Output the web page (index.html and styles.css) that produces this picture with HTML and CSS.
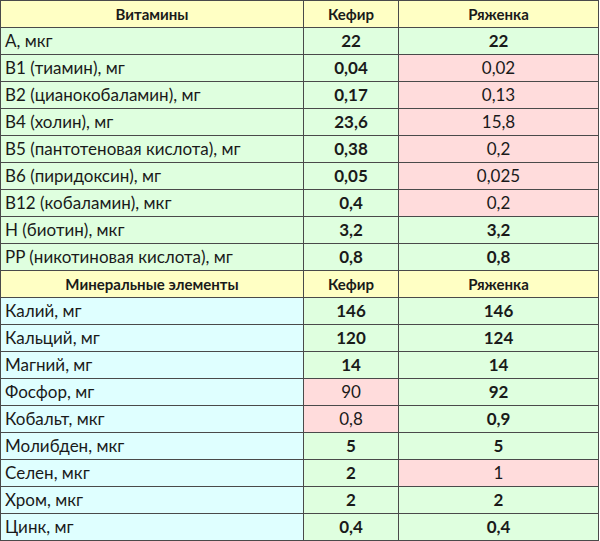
FILE: index.html
```html
<!DOCTYPE html>
<html lang="ru">
<head>
<meta charset="utf-8">
<link rel="stylesheet" href="styles.css">
</head>
<body>
<table class="tbl">
  <colgroup><col class="c1"><col class="c2"><col class="c3"></colgroup>
  <tr class="head"><td>Витамины</td><td>Кефир</td><td>Ряженка</td></tr>
  <tr class="vit"><td class="name">A, мкг</td><td class="g b">22</td><td class="g b">22</td></tr>
  <tr class="vit"><td class="name">B1 (тиамин), мг</td><td class="g b">0,04</td><td class="p">0,02</td></tr>
  <tr class="vit"><td class="name">B2 (цианокобаламин), мг</td><td class="g b">0,17</td><td class="p">0,13</td></tr>
  <tr class="vit"><td class="name">B4 (холин), мг</td><td class="g b">23,6</td><td class="p">15,8</td></tr>
  <tr class="vit"><td class="name">B5 (пантотеновая кислота), мг</td><td class="g b">0,38</td><td class="p">0,2</td></tr>
  <tr class="vit"><td class="name">B6 (пиридоксин), мг</td><td class="g b">0,05</td><td class="p">0,025</td></tr>
  <tr class="vit"><td class="name">B12 (кобаламин), мкг</td><td class="g b">0,4</td><td class="p">0,2</td></tr>
  <tr class="vit"><td class="name">H (биотин), мкг</td><td class="g b">3,2</td><td class="g b">3,2</td></tr>
  <tr class="vit"><td class="name">PP (никотиновая кислота), мг</td><td class="g b">0,8</td><td class="g b">0,8</td></tr>
  <tr class="head"><td>Минеральные элементы</td><td>Кефир</td><td>Ряженка</td></tr>
  <tr class="min"><td class="name">Калий, мг</td><td class="g b">146</td><td class="g b">146</td></tr>
  <tr class="min"><td class="name">Кальций, мг</td><td class="g b">120</td><td class="g b">124</td></tr>
  <tr class="min"><td class="name">Магний, мг</td><td class="g b">14</td><td class="g b">14</td></tr>
  <tr class="min"><td class="name">Фосфор, мг</td><td class="p">90</td><td class="g b">92</td></tr>
  <tr class="min"><td class="name">Кобальт, мкг</td><td class="p">0,8</td><td class="g b">0,9</td></tr>
  <tr class="min"><td class="name">Молибден, мкг</td><td class="g b">5</td><td class="g b">5</td></tr>
  <tr class="min"><td class="name">Селен, мкг</td><td class="g b">2</td><td class="p">1</td></tr>
  <tr class="min"><td class="name">Хром, мкг</td><td class="g b">2</td><td class="g b">2</td></tr>
  <tr class="min"><td class="name">Цинк, мг</td><td class="g b">0,4</td><td class="g b">0,4</td></tr>
</table>
</body>
</html>
```
FILE: styles.css
```css
html, body {
  margin: 0;
  padding: 0;
  background: #ffffff;
}
.tbl {
  border-collapse: collapse;
  table-layout: fixed;
  width: 598px;
  font-family: Lato, "Open Sans", sans-serif;
  font-size: 17px;
  color: #1a1a1a;
}
.c1 { width: 303px; }
.c2 { width: 95px; }
.c3 { width: 200px; }
.tbl td {
  border: 1px solid #4a4a4a;
  height: 26px;
  padding: 0 4px;
  text-align: center;
  white-space: nowrap;
  line-height: 20px;
}
.tbl td.name {
  text-align: left;
  padding-left: 4px;
}
.head td {
  background: #ffffc4;
  font-weight: bold;
  font-size: 15px;
}
.vit td.name { background: #dfffdf; }
.min td.name { background: #dfffff; }
.g { background: #dfffdf; }
.p { background: #ffdcdc; }
.tbl td.b { font-weight: bold; font-size: 17px; }
```
